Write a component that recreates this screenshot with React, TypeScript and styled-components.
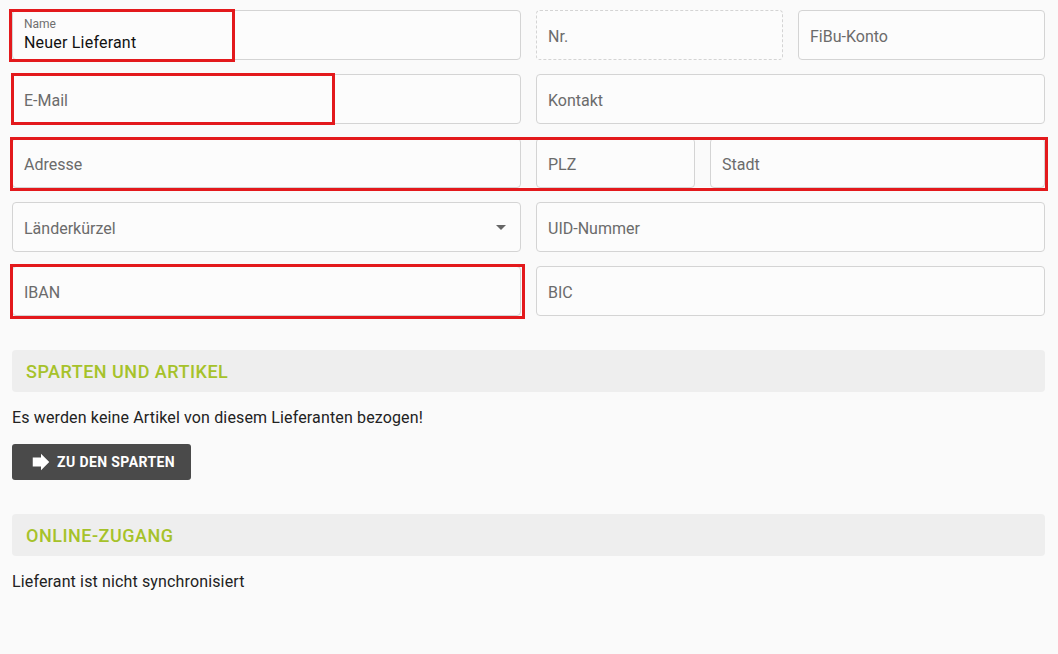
import React from 'react';
import styled, {createGlobalStyle} from 'styled-components';

const GlobalStyle = createGlobalStyle`
  html, body {
    margin: 0;
    padding: 0;
    background: #fafafa;
    font-family: Roboto, "Noto Sans", "Liberation Sans", sans-serif;
  }
`;

const Page = styled.div`
  position: relative;
  padding: 10px 13px 40px 12px;
  width: 1058px;
  box-sizing: border-box;
`;

const Form = styled.div`
  display: grid;
  grid-template-columns: 1fr 1fr;
  column-gap: 15px;
  row-gap: 14px;
`;

const Split = styled.div<{ $cols: string }>`
  display: grid;
  grid-template-columns: ${p => p.$cols};
  column-gap: 15px;
`;

const Field = styled.div<{ $dashed?: boolean }>`
  position: relative;
  height: 50px;
  box-sizing: border-box;
  border: 1px ${p => (p.$dashed ? 'dashed' : 'solid')} #d4d4d4;
  border-radius: 4px;
  background: #fcfcfc;
  padding: 2px 11px 0;
  display: flex;
  flex-direction: column;
  justify-content: center;
  color: #6b6b6b;
  font-size: 16px;
`;

const SmallLabel = styled.span`
  font-size: 12px;
  color: #6f6f6f;
  line-height: 14px;
  margin-top: -1px;
`;

const Value = styled.span`
  font-size: 16px;
  color: #111;
  line-height: 22px;
  margin-top: 1px;
  letter-spacing: 0.2px;
`;

const Caret = styled.span`
  position: absolute;
  right: 14px;
  top: 22px;
  width: 0;
  height: 0;
  border-left: 5px solid transparent;
  border-right: 5px solid transparent;
  border-top: 5px solid #666;
`;

const SectionHeader = styled.div<{ $top: number }>`
  margin-top: ${p => p.$top}px;
  height: 42px;
  border-radius: 4px;
  background: #eeeeee;
  display: flex;
  align-items: center;
  padding-left: 14px;
  color: #a6c22a;
  font-weight: 500;
  font-size: 18px;
  letter-spacing: 0.5px;
`;

const Text = styled.p`
  margin: 16px 0 0;
  font-size: 16px;
  color: #222;
  line-height: 20px;
  letter-spacing: 0.14px;
`;

const Button = styled.button`
  margin-top: 16px;
  display: inline-flex;
  align-items: center;
  gap: 5px;
  height: 36px;
  padding: 0 16px 0 18px;
  background: #4a4a4a;
  color: #fff;
  border: none;
  border-radius: 3px;
  font-family: inherit;
  font-weight: 700;
  font-size: 14px;
  letter-spacing: 0.4px;
  svg {
    width: 22px;
    height: 22px;
  }
`;

const Mark = styled.div<{ $x: number; $y: number; $w: number; $h: number }>`
  position: absolute;
  left: ${p => p.$x}px;
  top: ${p => p.$y}px;
  width: ${p => p.$w}px;
  height: ${p => p.$h}px;
  box-sizing: border-box;
  border: 3px solid #e3191c;
  pointer-events: none;
`;

export default function App() {
    return (
        <>
            <GlobalStyle/>
            <Page>
                <Form>
                    <Field>
                        <SmallLabel>Name</SmallLabel>
                        <Value>Neuer Lieferant</Value>
                    </Field>
                    <Split $cols="1fr 1fr">
                        <Field $dashed>Nr.</Field>
                        <Field>FiBu-Konto</Field>
                    </Split>

                    <Field>E-Mail</Field>
                    <Field>Kontakt</Field>

                    <Field>Adresse</Field>
                    <Split $cols="159px 1fr">
                        <Field>PLZ</Field>
                        <Field>Stadt</Field>
                    </Split>

                    <Field>
                        Länderkürzel
                        <Caret/>
                    </Field>
                    <Field>UID-Nummer</Field>

                    <Field>IBAN</Field>
                    <Field>BIC</Field>
                </Form>

                <SectionHeader $top={34}>SPARTEN UND ARTIKEL</SectionHeader>
                <Text>Es werden keine Artikel von diesem Lieferanten bezogen!</Text>
                <Button>
                    <svg viewBox="0 0 24 24" fill="#fff">
                        <path d="M12 7V3l9 9-9 9v-4H3V7z"/>
                    </svg>
                    ZU DEN SPARTEN
                </Button>

                <SectionHeader $top={34}>ONLINE-ZUGANG</SectionHeader>
                <Text>Lieferant ist nicht synchronisiert</Text>

                <Mark $x={9} $y={9} $w={226} $h={53}/>
                <Mark $x={11} $y={73} $w={324} $h={52}/>
                <Mark $x={10} $y={137} $w={1038} $h={54}/>
                <Mark $x={10} $y={264} $w={515} $h={55}/>
            </Page>
        </>
    );
}
